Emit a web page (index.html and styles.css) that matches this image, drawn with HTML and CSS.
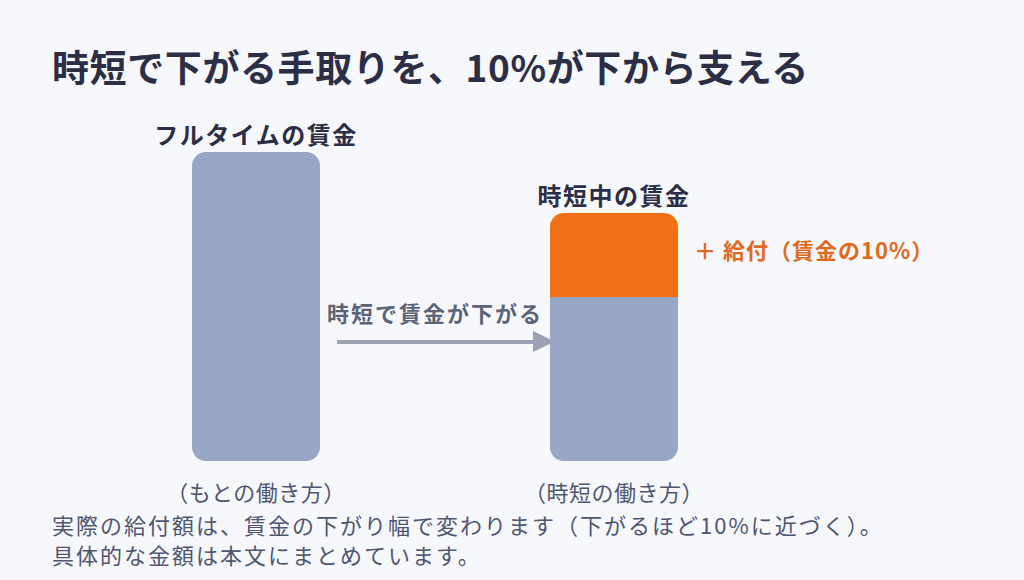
FILE: index.html
```html
<!DOCTYPE html>
<html lang="ja">
<head>
<meta charset="utf-8">
<title>時短で下がる手取りを、10%が下から支える</title>
<link rel="stylesheet" href="styles.css">
</head>
<body>
<main class="page">
  <h1 class="title">時短で下がる手取りを、10%が下から支える</h1>
  <section class="chart">
    <div class="col col-full">
      <div class="label">フルタイムの賃金</div>
      <div class="bar bar-full"></div>
    </div>
    <div class="col col-mid">
      <div class="arrow-text">時短で賃金が下がる</div>
      <div class="arrow">
        <span class="arrow-line"></span>
        <svg class="arrow-head" width="22" height="21" viewBox="0 0 22 21"><polygon points="0,0 22,10.5 0,21" fill="#9ca2b3"/></svg>
      </div>
    </div>
    <div class="col col-short">
      <div class="label">時短中の賃金</div>
      <div class="stack">
        <div class="seg seg-benefit"></div>
        <div class="seg seg-wage"></div>
      </div>
    </div>
    <div class="col col-side">
      <div class="side-label">＋ 給付（賃金の10%）</div>
    </div>
    <div class="caption cap-full">（もとの働き方）</div>
    <div class="caption cap-short">（時短の働き方）</div>
  </section>
  <p class="note">実際の給付額は、賃金の下がり幅で変わります（下がるほど10%に近づく）。<br>具体的な金額は本文にまとめています。</p>
</main>
</body>
</html>
```
FILE: styles.css
```css
html, body {
  margin: 0;
  padding: 0;
  background: #f7f8fc;
}
body {
  width: 1024px;
  height: 580px;
  overflow: hidden;
  font-family: "Noto Sans CJK JP", "Noto Sans", sans-serif;
}
.page {
  padding: 44px 0 0 52px;
}
.title {
  margin: 0;
  font-size: 37px;
  line-height: 44px;
  font-weight: 700;
  letter-spacing: 0.6px;
  color: #2b2e45;
}
.chart {
  margin: 31px 0 0 140px;
  display: grid;
  grid-template-columns: 128px 230px 128px 1fr;
  grid-template-rows: auto auto;
  align-items: end;
}
.col {
  display: flex;
  flex-direction: column;
  justify-content: flex-end;
  align-items: center;
  height: 100%;
}
.label {
  font-size: 24px;
  line-height: 30px;
  font-weight: 700;
  letter-spacing: 1.5px;
  color: #2b2e45;
  white-space: nowrap;
  margin-bottom: 3px;
  display: flex;
  justify-content: center;
  width: 100%;
}
.bar {
  width: 128px;
  background: #97a7c5;
  border-radius: 14px;
}
.bar-full {
  height: 309px;
}
.stack {
  width: 128px;
  display: flex;
  flex-direction: column;
  border-radius: 14px;
  overflow: hidden;
}
.seg-benefit {
  height: 84px;
  background: #f07016;
}
.seg-wage {
  height: 164px;
  background: #97a7c5;
}
.col-mid {
  padding-bottom: 109px;
  align-items: stretch;
  position: relative;
  z-index: 1;
}
.arrow-text {
  font-size: 22px;
  line-height: 30px;
  font-weight: 700;
  letter-spacing: 2px;
  color: #5b6378;
  text-align: center;
  white-space: nowrap;
}
.arrow {
  display: flex;
  align-items: center;
  margin: 4px -5px 0 17px;
}
.arrow-line {
  flex: 1;
  height: 4px;
  background: #9ca2b3;
}
.arrow-head {
  display: block;
  flex: none;
}
.col-side {
  align-items: flex-start;
  padding-left: 16px;
}
.side-label {
  height: 84px;
  margin-bottom: 164px;
  display: flex;
  align-items: center;
  font-size: 22px;
  font-weight: 700;
  letter-spacing: 1px;
  color: #e0691d;
  white-space: nowrap;
  padding-bottom: 12px;
  box-sizing: border-box;
}
.caption {
  grid-row: 2;
  margin-top: 15px;
  font-size: 22px;
  line-height: 30px;
  letter-spacing: 0.5px;
  color: #4f5670;
  white-space: nowrap;
  display: flex;
  justify-content: center;
}
.cap-full {
  grid-column: 1;
}
.cap-short {
  grid-column: 3;
}
.note {
  margin: 3px 0 0 0;
  font-size: 22px;
  line-height: 30px;
  letter-spacing: 2px;
  color: #4f5670;
  white-space: nowrap;
}
```
